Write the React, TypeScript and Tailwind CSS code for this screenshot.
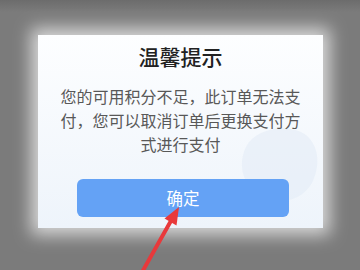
import React from "react";

export default function App() {
  return (
    <div
      className="relative w-[360px] h-[270px] overflow-hidden bg-[#7b7b7b] pt-[35px] pl-[38px]"
      style={{ fontFamily: '"Noto Sans CJK SC", "Noto Sans", sans-serif' }}
    >
      <div className="absolute inset-x-0 top-0 h-[12px] bg-gradient-to-b from-[#6c6c6c] to-transparent" />
      <div className="relative w-[285px] h-[193px] bg-gradient-to-b from-[#fdfeff] to-[#eef4fb] shadow-[0_0_16px_7px_rgba(255,255,255,0.7)] flex flex-col items-stretch">
        <svg
          className="absolute right-0 top-[70px]"
          width="95"
          height="110"
          viewBox="0 0 95 110"
        >
          <path
            d="M18 42 C28 22 62 18 78 30 C92 42 92 62 84 78 C76 92 60 98 46 96 C38 104 28 108 18 104 C28 98 30 92 28 86 C14 78 10 58 18 42 Z"
            fill="#e2ebf6"
            opacity="0.55"
          />
        </svg>
        <div className="relative pt-[7px] text-center text-[21px] leading-[28px] font-medium text-[#222222]">
          温馨提示
        </div>
        <div className="relative mt-[14px] px-[20px] text-center text-[16px] leading-[24px] text-[#585858]">
          您的可用积分不足，此订单无法支付，您可以取消订单后更换支付方式进行支付
        </div>
        <div className="relative mt-[23px] ml-[39px] mr-[34px] h-[38px] rounded-[6px] bg-[#64a2f5] flex items-center justify-center text-white text-[16.5px]">
          确定
        </div>
      </div>
      <svg className="absolute left-0 top-0" width="360" height="270" viewBox="0 0 360 270">
        <line x1="141" y1="274" x2="172" y2="219" stroke="#e8393b" strokeWidth="4" strokeLinecap="round" />
        <polygon points="179,207 176.5,225.5 164.5,218.5" fill="#e8393b" />
      </svg>
    </div>
  );
}
